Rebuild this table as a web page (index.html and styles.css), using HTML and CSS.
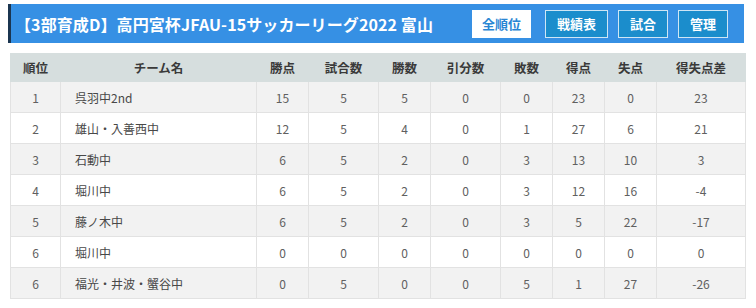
FILE: index.html
```html
<!DOCTYPE html>
<html lang="ja">
<head>
<meta charset="utf-8">
<link rel="stylesheet" href="styles.css">
</head>
<body>
<div class="page">
  <div class="titlebar">
    <h1 class="title">【3部育成D】高円宮杯JFAU-15サッカーリーグ2022 富山</h1>
    <nav class="tabs">
      <span class="tab active">全順位</span>
      <span class="tab">戦績表</span>
      <span class="tab">試合</span>
      <span class="tab">管理</span>
    </nav>
  </div>
  <table class="standings">
    <colgroup>
      <col class="c-rank"><col class="c-team"><col class="c-n"><col class="c-w"><col class="c-n"><col class="c-w"><col class="c-n"><col class="c-n"><col class="c-n"><col class="c-diff">
    </colgroup>
    <thead>
      <tr><th>順位</th><th>チーム名</th><th>勝点</th><th>試合数</th><th>勝数</th><th>引分数</th><th>敗数</th><th>得点</th><th>失点</th><th>得失点差</th></tr>
    </thead>
    <tbody>
      <tr><td>1</td><td class="team">呉羽中2nd</td><td>15</td><td>5</td><td>5</td><td>0</td><td>0</td><td>23</td><td>0</td><td>23</td></tr>
      <tr><td>2</td><td class="team">雄山・入善西中</td><td>12</td><td>5</td><td>4</td><td>0</td><td>1</td><td>27</td><td>6</td><td>21</td></tr>
      <tr><td>3</td><td class="team">石動中</td><td>6</td><td>5</td><td>2</td><td>0</td><td>3</td><td>13</td><td>10</td><td>3</td></tr>
      <tr><td>4</td><td class="team">堀川中</td><td>6</td><td>5</td><td>2</td><td>0</td><td>3</td><td>12</td><td>16</td><td>-4</td></tr>
      <tr><td>5</td><td class="team">藤ノ木中</td><td>6</td><td>5</td><td>2</td><td>0</td><td>3</td><td>5</td><td>22</td><td>-17</td></tr>
      <tr><td>6</td><td class="team">堀川中</td><td>0</td><td>0</td><td>0</td><td>0</td><td>0</td><td>0</td><td>0</td><td>0</td></tr>
      <tr><td>6</td><td class="team">福光・井波・蟹谷中</td><td>0</td><td>5</td><td>0</td><td>0</td><td>5</td><td>1</td><td>27</td><td>-26</td></tr>
    </tbody>
  </table>
</div>
</body>
</html>
```
FILE: styles.css
```css
* { box-sizing: border-box; }
html, body { margin: 0; padding: 0; background: #fff; }
body {
  font-family: "Noto Sans CJK JP", "Noto Sans", "DejaVu Sans", sans-serif;
  color: #555;
}
.page {
  padding: 4px 12px 0 8px;
}
.titlebar {
  display: flex;
  align-items: center;
  height: 39px;
  background: #3690e4;
  border-left: 3px solid #1b3550;
  padding: 0 16px 0 4px;
}
.title {
  margin: 0;
  flex: 1;
  font-size: 16px;
  font-weight: bold;
  color: #fff;
  letter-spacing: 0.1px;
  white-space: nowrap;
}
.tabs {
  display: flex;
  gap: 10px;
}
.tab {
  display: flex;
  align-items: center;
  justify-content: center;
  height: 28px;
  padding: 0 11px;
  font-size: 13px;
  font-weight: bold;
  color: #fff;
  background: #1b8dcc;
  border: 1px solid #cfe6f5;
}
.tab.active {
  padding: 0 9px;
  margin-right: 4px;
  background: #fff;
  color: #2a86d4;
  border-color: #fff;
}
.standings {
  margin: 10px 0 0 2px;
  width: 733px;
  border-collapse: collapse;
  table-layout: fixed;
  font-size: 12px;
}
.c-rank { width: 50px; }
.c-team { width: 196px; }
.c-n { width: 52px; }
.c-w { width: 70px; }
.c-diff { width: 89px; }
.standings th {
  height: 28px;
  background: #d6dede;
  color: #3a3a3a;
  font-weight: bold;
  font-size: 12.5px;
  text-align: center;
  border: 1px solid #d6dede;
}
.standings td {
  height: 31px;
  text-align: center;
  border: 1px solid #e2e2e2;
  color: #606060;
}
.standings td.team {
  text-align: left;
  padding-left: 14px;
  color: #484848;
}
.standings tbody tr:nth-child(odd) td { background: #f2f2f2; }
.standings tbody tr:nth-child(even) td { background: #fff; }
```
